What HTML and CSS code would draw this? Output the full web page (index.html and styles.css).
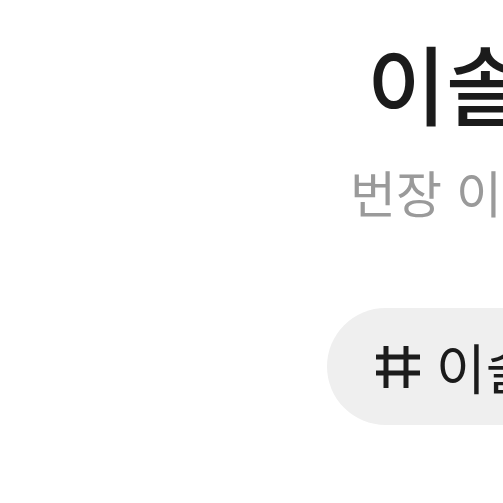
FILE: index.html
```html
<!DOCTYPE html>
<html lang="ko">
<head>
  <meta charset="UTF-8">
  <meta name="viewport" content="width=device-width, initial-scale=1.0">
  <title>이솔</title>
  <link rel="stylesheet" href="styles.css">
</head>
<body>
  <div class="profile">
    <h1 class="name">이솔이</h1>
    <div class="subtitle">번장 이솔이</div>
    <div class="tags">
      <span class="tag">
        <svg class="hash" viewBox="0 0 44 44" width="44" height="44" aria-hidden="true">
          <path d="M10 1V43M30 1V43M0 12H44M0 28H44" stroke="#1c1c1c" stroke-width="5" fill="none"/>
        </svg>
        이솔이
      </span>
    </div>
  </div>
</body>
</html>
```

FILE: styles.css
```css
:root {
  --text-main: #1b1b1b;
  --text-sub: #9a9a9a;
  --tag-bg: #efefef;
}
body {
  margin: 0;
  background: #fff;
  font-family: "Noto Sans CJK KR", "Noto Sans", sans-serif;
  overflow: hidden;
  height: 100vh;
}
.profile {
  display: flex;
  flex-direction: column;
  padding-top: 39px;
  width: 1000px;
}
.name {
  margin: 0 0 0 367px;
  font-size: 86px;
  font-weight: 500;
  line-height: 1;
  color: var(--text-main);
  white-space: nowrap;
}
.subtitle {
  margin: 41px 0 0 350px;
  font-size: 50px;
  line-height: 1;
  color: var(--text-sub);
  white-space: nowrap;
}
.tags {
  margin: 92px 0 0 327px;
  display: flex;
}
.tag {
  display: flex;
  align-items: center;
  gap: 16px;
  height: 117px;
  padding: 0 48px 0 49px;
  border-radius: 59px;
  background: var(--tag-bg);
  font-size: 54px;
  color: var(--text-main);
  white-space: nowrap;
}
.hash {
  flex: none;
}
```
